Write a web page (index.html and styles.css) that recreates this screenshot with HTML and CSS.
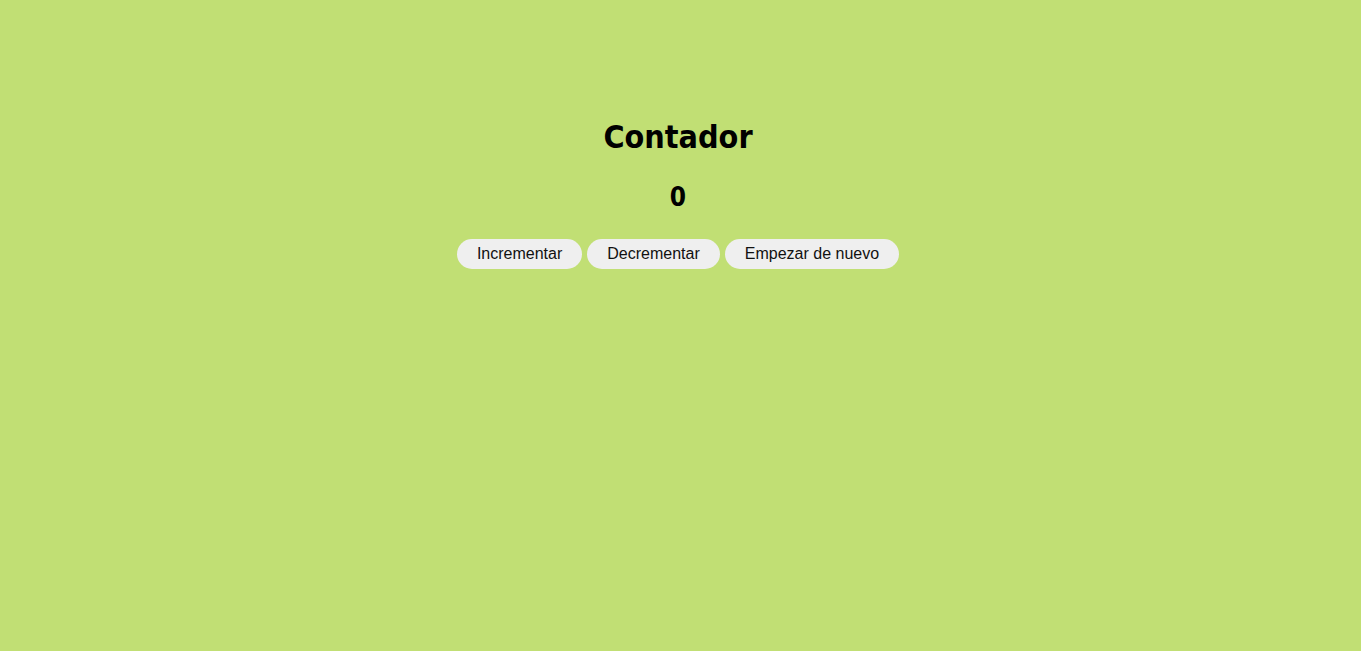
FILE: index.html
```html
<!DOCTYPE html>
<html lang="es">
<head>
<meta charset="utf-8">
<title>Contador</title>
<link rel="stylesheet" href="styles.css">
</head>
<body>
<main class="app">
  <h1 class="title">Contador</h1>
  <h2 class="count">0</h2>
  <div class="actions">
    <button class="btn">Incrementar</button>
    <button class="btn">Decrementar</button>
    <button class="btn">Empezar de nuevo</button>
  </div>
</main>
</body>
</html>
```
FILE: styles.css
```css
html, body {
  margin: 0;
  padding: 0;
}
body {
  background: #c1df74;
  font-family: "DejaVu Sans Condensed", "DejaVu Sans", sans-serif;
  color: #000;
  min-height: 100vh;
}
.app {
  display: flex;
  flex-direction: column;
  align-items: center;
  padding-top: 100px;
  padding-right: 5px;
}
.title {
  font-size: 32px;
  font-weight: bold;
  margin: 19px 0 0;
  line-height: 37px;
}
.count {
  font-size: 26px;
  font-weight: bold;
  margin: 26px 0 0;
  line-height: 30px;
}
.actions {
  display: flex;
  gap: 5px;
  margin-top: 27px;
}
.btn {
  font-family: "Liberation Sans", Arial, sans-serif;
  font-size: 16px;
  color: #111;
  background: #efefef;
  border: none;
  border-radius: 15px;
  height: 30px;
  padding: 0 20px;
}
```
